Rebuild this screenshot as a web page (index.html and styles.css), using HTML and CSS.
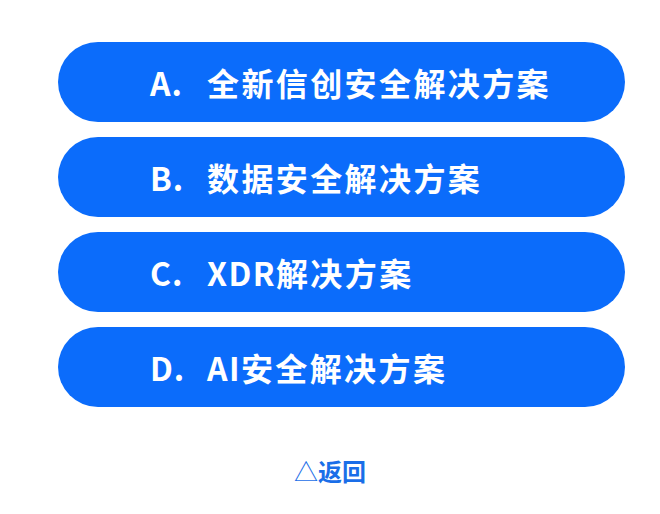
FILE: index.html
```html
<!DOCTYPE html>
<html lang="zh">
<head>
<meta charset="utf-8">
<link rel="stylesheet" href="styles.css">
</head>
<body>
<div class="page">
  <div class="list">
    <div class="option"><span class="letter">A.</span><span class="label">全新信创安全解决方案</span></div>
    <div class="option"><span class="letter">B.</span><span class="label">数据安全解决方案</span></div>
    <div class="option"><span class="letter">C.</span><span class="label"><span class="latin">XDR</span>解决方案</span></div>
    <div class="option"><span class="letter">D.</span><span class="label"><span class="latin">AI</span>安全解决方案</span></div>
  </div>
  <div class="back"><span class="tri">△</span>返回</div>
</div>
</body>
</html>
```
FILE: styles.css
```css
html, body {
  margin: 0;
  padding: 0;
  background: #ffffff;
}
.page {
  width: 660px;
  height: 514px;
  padding-top: 42px;
  box-sizing: border-box;
  font-family: "Noto Sans CJK SC", "Noto Sans", sans-serif;
}
.list {
  margin-left: 58px;
  width: 567px;
  display: flex;
  flex-direction: column;
  gap: 15px;
}
.option {
  height: 80px;
  border-radius: 40px;
  background: #0b6cfb;
  color: #ffffff;
  display: flex;
  align-items: center;
  padding-left: 92px;
  font-size: 32px;
  font-weight: 700;
  letter-spacing: 2.4px;
}
.letter {
  width: 57px;
  letter-spacing: 1px;
}
.latin {
  letter-spacing: 1.4px;
}
.back {
  margin-top: 48px;
  text-align: center;
  color: #1a6ee8;
  font-size: 24px;
  font-weight: 700;
  line-height: 32px;
}
.tri {
  font-weight: 400;
}
```
